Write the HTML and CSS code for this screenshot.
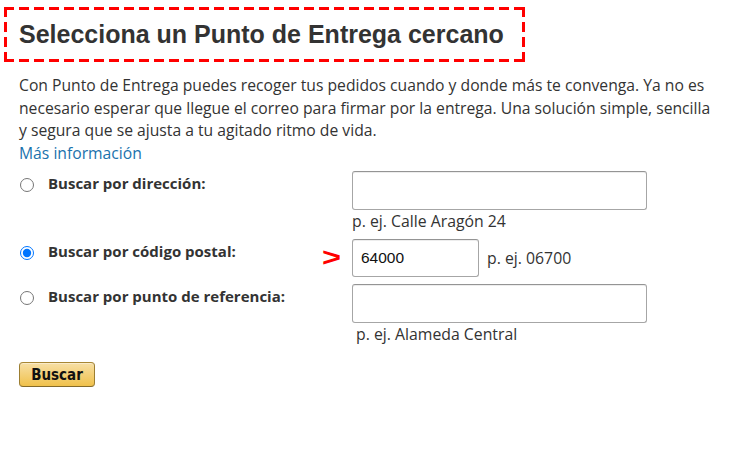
FILE: index.html
```html
<!DOCTYPE html>
<html lang="es">
<head>
    <meta charset="UTF-8">
    <title>Punto de Entrega</title>
    <link rel="stylesheet" href="styles.css">
</head>
<body>

    <div class="page">
        <div class="title-box">
            <h1>Selecciona un Punto de Entrega cercano</h1>
        </div>

        <p class="intro">Con Punto de Entrega puedes recoger tus pedidos cuando y donde más te convenga. Ya no es necesario esperar que llegue el correo para firmar por la entrega. Una solución simple, sencilla y segura que se ajusta a tu agitado ritmo de vida.<br>
        <a href="#" class="more">Más información</a></p>

        <form class="search-form">
            <div class="row">
                <label class="option">
                    <input type="radio" name="searchType" value="address">
                    <span>Buscar por dirección:</span>
                </label>
                <div class="field">
                    <input type="text" class="text-input wide" name="address">
                    <div class="hint">p. ej. Calle Aragón 24</div>
                </div>
            </div>

            <div class="row">
                <label class="option">
                    <input type="radio" name="searchType" value="postal" checked>
                    <span>Buscar por código postal:</span>
                </label>
                <div class="field inline">
                    <span class="marker">&gt;</span>
                    <input type="text" class="text-input short" name="postal" value="64000">
                    <span class="hint">p. ej. 06700</span>
                </div>
            </div>

            <div class="row">
                <label class="option">
                    <input type="radio" name="searchType" value="landmark">
                    <span>Buscar por punto de referencia:</span>
                </label>
                <div class="field">
                    <input type="text" class="text-input wide" name="landmark">
                    <div class="hint shifted">p. ej. Alameda Central</div>
                </div>
            </div>

            <button type="button" class="search-btn">Buscar</button>
        </form>
    </div>

</body>
</html>
```

FILE: styles.css
```css
body {
    margin: 0;
    padding: 0;
    background: #fff;
    color: #333;
    font-family: 'Open Sans', 'Noto Sans', sans-serif;
    font-size: 15px;
}

.page {
    padding: 7px 0 0 4px;
}

/* Title with the red dashed frame (long dashes, drawn as gradients) */
.title-box {
    display: inline-block;
    padding: 12px 21px 13px 15px;
    background:
        repeating-linear-gradient(90deg, #ff0000 0 10px, transparent 10px 15px) left top / 100% 3px no-repeat,
        repeating-linear-gradient(90deg, #ff0000 0 10px, transparent 10px 15px) left bottom / 100% 3px no-repeat,
        repeating-linear-gradient(180deg, #ff0000 0 10px, transparent 10px 15px) left top / 3px 100% no-repeat,
        repeating-linear-gradient(180deg, #ff0000 0 10px, transparent 10px 15px) right top / 3px 100% no-repeat;
}

h1 {
    margin: 0;
    font-family: 'Liberation Sans', Arial, sans-serif;
    font-size: 25px;
    font-weight: 700;
    color: #333;
    line-height: 30px;
}

.intro {
    margin: 12px 0 0 15px;
    width: 698px;
    font-size: 15.7px;
    line-height: 22.5px;
    color: #333;
}

.more {
    color: #1a72ad;
    text-decoration: none;
}

.search-form {
    margin: 7px 0 0 15px;
}

.row {
    display: flex;
    align-items: flex-start;
    margin-bottom: 7px;
}

.option {
    display: flex;
    align-items: flex-start;
    width: 333px;
    font-weight: 700;
    color: #333;
    line-height: 24px;
}

.option input {
    width: 14px;
    height: 14px;
    margin: 7px 14px 0 1px;
}

.field {
    position: relative;
}

.field.inline {
    display: flex;
    align-items: center;
    gap: 8px;
}

.text-input {
    box-sizing: border-box;
    height: 39px;
    padding: 0 8px;
    border: 1px solid #a6a6a6;
    border-top-color: #949494;
    border-radius: 3px;
    box-shadow: 0 1px 0 rgba(255, 255, 255, 0.5), 0 1px 0 rgba(0, 0, 0, 0.07) inset;
    font-family: 'Liberation Sans', Arial, sans-serif;
    font-size: 15.5px;
    color: #111;
    outline: none;
}

.text-input.wide {
    width: 295px;
}

.text-input.short {
    width: 127px;
    height: 38px;
}

.hint {
    font-size: 15.8px;
    line-height: 22px;
    color: #333;
}

.hint.shifted {
    padding-left: 4px;
}

/* Red pointer next to the postal code field */
.marker {
    position: absolute;
    left: -30px;
    top: 3px;
    color: #ff0000;
    font-family: 'Liberation Sans', Arial, sans-serif;
    font-size: 26px;
    font-weight: 700;
    transform: scaleX(1.25);
    transform-origin: left center;
}

.search-btn {
    display: block;
    margin-top: 17px;
    width: 76px;
    height: 25px;
    padding: 0;
    border: 1px solid;
    border-color: #a88734 #9c7e31 #846a29;
    border-radius: 4px;
    background: linear-gradient(to bottom, #f7dfa5, #f0c14b);
    box-shadow: 0 1px 0 rgba(255, 255, 255, 0.4) inset;
    font-family: 'DejaVu Sans Condensed', 'DejaVu Sans', sans-serif;
    font-size: 15px;
    font-weight: 700;
    color: #111;
    cursor: pointer;
}
```
